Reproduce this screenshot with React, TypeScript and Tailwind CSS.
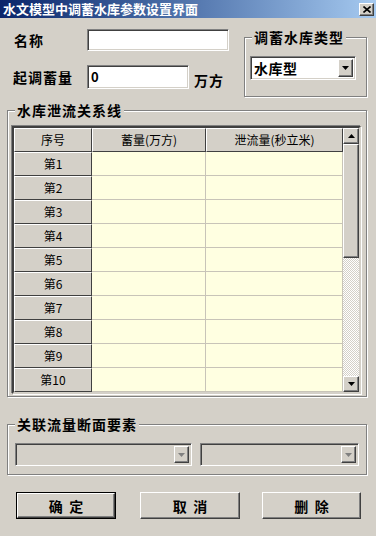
import React from "react";

const F = { fontFamily: '"Noto Sans CJK SC", "Noto Sans", sans-serif' };

const raised =
  "border border-t-white border-l-white border-r-[#404040] border-b-[#404040] shadow-[inset_-1px_-1px_0_#808080,inset_1px_1px_0_#d4d0c8]";
const sunken =
  "border border-t-[#808080] border-l-[#808080] border-r-white border-b-white shadow-[inset_1px_1px_0_#404040,inset_-1px_-1px_0_#d4d0c8]";

function Group({ title, className, children }: { title: string; className: string; children?: React.ReactNode }) {
  return (
    <div className={`relative border border-[#808080] shadow-[inset_1px_1px_0_#fff,1px_1px_0_#fff] ${className}`}>
      <span className="absolute left-[7px] top-[-10px] bg-[#d4d0c8] px-[2px] text-[14px] font-bold leading-[18px] tracking-[1px] text-black">
        {title}
      </span>
      {children}
    </div>
  );
}

function Arrow({ up, color = "#000" }: { up?: boolean; color?: string }) {
  return (
    <svg width="7" height="4" viewBox="0 0 7 4">
      {up ? <path d="M3.5 0 L7 4 L0 4 Z" fill={color} /> : <path d="M0 0 L7 0 L3.5 4 Z" fill={color} />}
    </svg>
  );
}

export default function App() {
  const rows = Array.from({ length: 10 }, (_, i) => i + 1);
  return (
    <div style={F} className="w-[376px] h-[536px] bg-[#d4d0c8] text-black overflow-hidden flex flex-col">
      {/* title bar */}
      <div className="h-[18px] flex items-center bg-gradient-to-r from-[#0a246a] to-[#a6caf0] pl-[3px] pr-[2px]">
        <span className="text-white text-[13px] font-bold leading-[18px]">水文模型中调蓄水库参数设置界面</span>
        <div className={`ml-auto w-[15px] h-[13px] bg-[#d4d0c8] flex items-center justify-center ${raised}`}>
          <svg width="8" height="7" viewBox="0 0 8 7">
            <path d="M0.5 0.5 L7.5 6.5 M7.5 0.5 L0.5 6.5" stroke="#000" strokeWidth="1.6" />
          </svg>
        </div>
      </div>

      {/* top area */}
      <div className="h-[92px] flex items-start">
        <div className="ml-[13px] mt-[11px] flex flex-col">
          <div className="flex items-center h-[22px]">
            <span className="w-[74px] text-[14px] font-bold tracking-[1px] leading-[18px] pl-[1px]">名称</span>
            <div className={`w-[142px] h-[22px] bg-white ${sunken}`} />
          </div>
          <div className="flex items-center h-[24px] mt-[14px]">
            <span className="w-[74px] text-[14px] font-bold tracking-[1px] leading-[18px]">起调蓄量</span>
            <div className={`w-[102px] h-[24px] bg-white flex items-center pl-[3px] text-[13px] font-bold ${sunken}`}>0</div>
            <span className="ml-[5px] mt-[6px] text-[14px] font-bold tracking-[1px] leading-[18px]">万方</span>
          </div>
        </div>
        <Group title="调蓄水库类型" className="ml-auto mr-[9px] mt-[19px] w-[123px] h-[60px]">
          <div className={`ml-[5px] mt-[18px] w-[106px] h-[24px] bg-white flex items-center ${sunken}`}>
            <span className="pl-[3px] text-[14px] font-bold leading-[18px] tracking-[0.5px]">水库型</span>
            <div className={`ml-auto mr-[2px] w-[15px] h-[18px] bg-[#d4d0c8] flex items-center justify-center ${raised}`}>
              <Arrow />
            </div>
          </div>
        </Group>
      </div>

      {/* middle group */}
      <Group title="水库泄流关系线" className="ml-[7px] w-[360px] h-[287px]">
        <div className="ml-[4px] mt-[15px] flex border-2 border-t-[#404040] border-l-[#404040] border-r-[#d4d0c8] border-b-[#d4d0c8] shadow-[-1px_-1px_0_#808080,1px_1px_0_#fff] w-[349px]">
          <div className="grid grid-cols-[78px_114px_137px] text-[12px] leading-[16px]">
            {["序号", "蓄量(万方)", "泄流量(秒立米)"].map((h) => (
              <div
                key={h}
                className="h-[24px] bg-[#d4d0c8] flex items-center justify-center border-t border-l border-t-white border-l-white border-r border-b border-r-[#404040] border-b-[#404040]"
              >
                {h}
              </div>
            ))}
            {rows.map((r) => (
              <React.Fragment key={r}>
                <div className="h-[24px] bg-[#d4d0c8] flex items-center justify-center border-t border-l border-t-white border-l-white border-r border-b border-r-[#404040] border-b-[#404040]">
                  第{r}
                </div>
                <div className="h-[24px] bg-[#ffffe1] border-r border-b border-[#c8c4b8]" />
                <div className="h-[24px] bg-[#ffffe1] border-r border-b border-[#c8c4b8]" />
              </React.Fragment>
            ))}
          </div>
          <div className="w-[16px] h-[264px] flex flex-col">
            <div className={`h-[16px] bg-[#d4d0c8] flex items-center justify-center ${raised}`}>
              <Arrow up />
            </div>
            <div className={`h-[114px] bg-[#d4d0c8] ${raised}`} />
            <div className="flex-1 bg-[repeating-conic-gradient(#d4d0c8_0_25%,#ffffff_0_50%)] bg-[length:2px_2px]" />
            <div className={`h-[16px] bg-[#d4d0c8] flex items-center justify-center ${raised}`}>
              <Arrow />
            </div>
          </div>
        </div>
      </Group>

      {/* bottom group */}
      <Group title="关联流量断面要素" className="ml-[7px] mt-[27px] w-[360px] h-[51px]">
        <div className="flex ml-[7px] mt-[18px] gap-[8px]">
          <div className={`w-[177px] h-[23px] bg-[#d4d0c8] flex items-center ${sunken}`}>
            <div className={`ml-auto mr-[2px] w-[15px] h-[17px] bg-[#d4d0c8] flex items-center justify-center ${raised}`}>
              <Arrow color="#808080" />
            </div>
          </div>
          <div className={`w-[159px] h-[23px] bg-[#d4d0c8] flex items-center ${sunken}`}>
            <div className={`ml-auto mr-[2px] w-[15px] h-[17px] bg-[#d4d0c8] flex items-center justify-center ${raised}`}>
              <Arrow color="#808080" />
            </div>
          </div>
        </div>
      </Group>

      {/* buttons */}
      <div className="flex mt-[17px] h-[27px]">
        <div className="ml-[16px] w-[100px] h-[27px] border border-black">
          <div className={`w-full h-full flex items-center justify-center text-[14px] font-bold leading-[18px] ${raised}`}>
            确&nbsp;&nbsp;定
          </div>
        </div>
        <div className={`ml-[24px] w-[100px] h-[27px] flex items-center justify-center text-[14px] font-bold leading-[18px] ${raised}`}>
          取&nbsp;&nbsp;消
        </div>
        <div className={`ml-[22px] w-[99px] h-[27px] flex items-center justify-center text-[14px] font-bold leading-[18px] ${raised}`}>
          删&nbsp;&nbsp;除
        </div>
      </div>
    </div>
  );
}
